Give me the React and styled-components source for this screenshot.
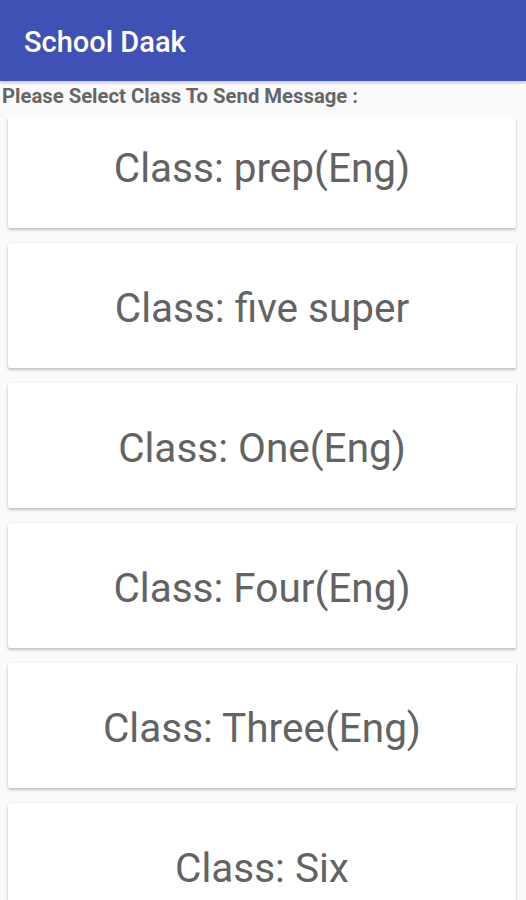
import React from "react";
import styled, { createGlobalStyle } from "styled-components";

const Global = createGlobalStyle`
  html, body { margin: 0; padding: 0; background: #fafafa; }
  body { font-family: Roboto, "Noto Sans", Arial, sans-serif; }
  #root { height: 900px; }
`;

const Screen = styled.div`
  width: 526px;
  height: 900px;
  display: flex;
  flex-direction: column;
  background: #fafafa;
  overflow: hidden;
`;

const AppBar = styled.header`
  height: 81px;
  flex: none;
  background: #3f51b5;
  display: flex;
  align-items: center;
  padding-left: 24px;
  box-shadow: 0 2px 3px rgba(0, 0, 0, 0.2);
  position: relative;
  z-index: 1;
`;

const Title = styled.h1`
  margin: 0;
  color: #fff;
  font-family: Roboto, Arial, sans-serif;
  font-weight: 500;
  font-size: 29px;
  letter-spacing: 0;
  margin-top: 2px;
`;

const Prompt = styled.div`
  flex: none;
  padding: 3px 0 0 2px;
  height: 38px;
  box-sizing: border-box;
  color: #666;
  font-family: Roboto, Arial, sans-serif;
  font-weight: 700;
  font-size: 20.3px;
  line-height: 24px;
`;

const List = styled.div`
  flex: 1;
  overflow: hidden;
  padding: 0 10px 0 8px;
`;

const Track = styled.div`
  margin-top: -16px;
  display: flex;
  flex-direction: column;
  gap: 15px;
`;

const Card = styled.div`
  height: 125px;
  background: #fff;
  border-radius: 2px;
  box-shadow: 0 2px 3px rgba(0, 0, 0, 0.22), 0 0 2px rgba(0, 0, 0, 0.08);
  display: flex;
  align-items: center;
  justify-content: center;
  color: #636363;
  font-family: Roboto, Arial, sans-serif;
  font-size: 40.5px;
  padding-top: 4px;
  box-sizing: border-box;
`;

const classes = [
  "prep(Eng)",
  "five super",
  "One(Eng)",
  "Four(Eng)",
  "Three(Eng)",
  "Six",
];

export default function App() {
  return (
    <>
      <Global />
      <Screen>
        <AppBar>
          <Title>School Daak</Title>
        </AppBar>
        <Prompt>Please Select Class To Send Message :</Prompt>
        <List>
          <Track>
            {classes.map((c) => (
              <Card key={c}>Class: {c}</Card>
            ))}
          </Track>
        </List>
      </Screen>
    </>
  );
}
